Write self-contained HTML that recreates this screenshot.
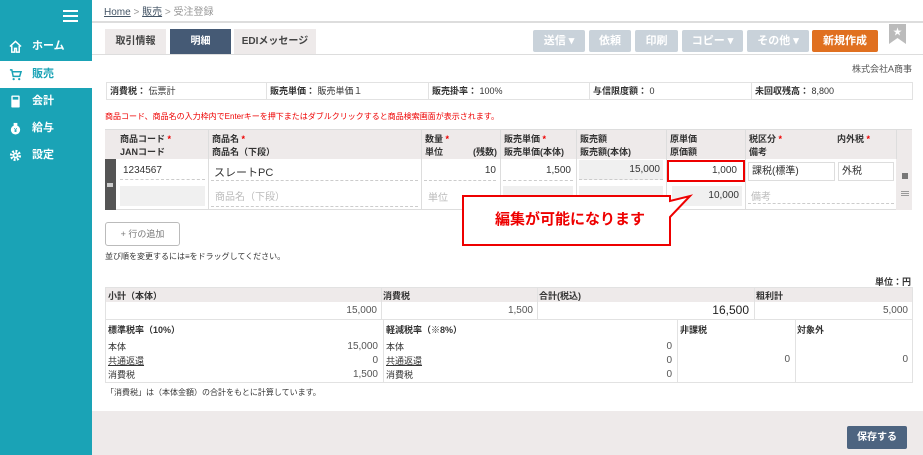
<!DOCTYPE html>
<html><head><meta charset="utf-8"><style>
*{box-sizing:border-box;margin:0;padding:0}
body{width:923px;height:455px;overflow:hidden;background:#fff;font-family:"Liberation Sans","Noto Sans CJK JP",sans-serif;font-size:10px;color:#333;position:relative}
.a{position:absolute}
#side{left:0;top:0;width:92px;height:455px;background:#1aa3b6}
.nav{position:absolute;left:0;width:92px;height:27px;color:#fff;font-weight:bold;font-size:11px;line-height:27px;padding-left:32px}
.nav.on{background:#fff;color:#1aa3b6}
.ic{position:absolute;left:9px;top:7px;width:13px;height:13px}
.tab{position:absolute;top:29px;height:25px;background:#eeeaea;line-height:25px;text-align:center;font-size:10px;font-weight:bold;color:#444}
.btn{position:absolute;top:30px;height:22px;background:#c9d2da;color:#fff;border-radius:2px;line-height:22px;text-align:center;font-weight:bold;font-size:11px}
.cell{position:absolute;border:1px solid #e2e2e2;height:18px;line-height:16px;padding-left:3px;font-size:9px}
.th{position:absolute;font-weight:bold;font-size:9px;line-height:13px;padding:3px 3px}
.r{text-align:right}
</style></head><body>
<div id="side" class="a">
<div class="a" style="left:63px;top:10px;width:15px;height:2px;background:#fff"></div>
<div class="a" style="left:63px;top:15px;width:15px;height:2px;background:#fff"></div>
<div class="a" style="left:63px;top:20px;width:15px;height:2px;background:#fff"></div>
<div class="nav" style="top:33px"><svg class="ic" viewBox="0 0 14 14"><path d="M1 7L7 1.5 13 7M3 6v7h3V9h2v4h3V6" fill="none" stroke="#fff" stroke-width="1.6"/></svg>ホーム</div>
<div class="nav on" style="top:61px"><svg class="ic" viewBox="0 0 14 14"><path d="M1 2h2l1.5 7h7l1.5-5H4" fill="none" stroke="#1aa3b6" stroke-width="1.6"/><circle cx="5" cy="12" r="1.2" fill="#1aa3b6"/><circle cx="11" cy="12" r="1.2" fill="#1aa3b6"/></svg>販売</div>
<div class="nav" style="top:88px"><svg class="ic" viewBox="0 0 14 14"><rect x="2.5" y="0.5" width="9" height="13" rx="1" fill="#fff"/><rect x="4" y="2" width="6" height="3" fill="#1aa3b6"/></svg>会計</div>
<div class="nav" style="top:115px"><svg class="ic" viewBox="0 0 14 14"><circle cx="7" cy="8.5" r="5" fill="#fff"/><rect x="5" y="1" width="4" height="3" fill="#fff"/><text x="7" y="11" font-size="6" text-anchor="middle" fill="#1aa3b6">¥</text></svg>給与</div>
<div class="nav" style="top:142px"><svg class="ic" viewBox="0 0 14 14"><circle cx="7" cy="7" r="4.5" fill="none" stroke="#fff" stroke-width="3" stroke-dasharray="2 1.5"/><circle cx="7" cy="7" r="3" fill="#fff"/><circle cx="7" cy="7" r="1.3" fill="#1aa3b6"/></svg>設定</div>
</div>
<div class="a" style="left:104px;top:3px;font-size:10px;color:#999"><span style="color:#456;text-decoration:underline">Home</span> &gt; <span style="color:#456;text-decoration:underline">販売</span> &gt; 受注登録</div>
<div class="a" style="left:92px;top:21px;width:831px;height:2px;background:#ddd"></div>
<div class="tab" style="left:105px;width:61px">取引情報</div>
<div class="tab" style="left:170px;width:61px;background:#455a75;color:#fff">明細</div>
<div class="tab" style="left:234px;width:82px">EDIメッセージ</div>
<div class="btn" style="left:533px;width:52px">送信 ▾</div>
<div class="btn" style="left:589px;width:42px">依頼</div>
<div class="btn" style="left:635px;width:43px">印刷</div>
<div class="btn" style="left:682px;width:61px">コピー ▾</div>
<div class="btn" style="left:747px;width:62px">その他 ▾</div>
<div class="btn" style="left:812px;width:66px;background:#e07020">新規作成</div>
<svg class="a" style="left:889px;top:24px" width="17" height="20" viewBox="0 0 17 20"><path d="M0 0h17v20l-8.5-6L0 20z" fill="#bbb"/><text x="8.5" y="11" font-size="9" fill="#fff" text-anchor="middle">★</text></svg>
<div class="a" style="left:92px;top:54px;width:831px;height:1px;background:#ddd"></div>
<div class="a" style="right:11px;top:62px;font-size:9px;color:#555">株式会社A商事</div>
<div class="cell" style="left:106px;top:82px;width:161px"><b>消費税：</b> 伝票計</div>
<div class="cell" style="left:266px;top:82px;width:163px"><b>販売単価：</b> 販売単価１</div>
<div class="cell" style="left:428px;top:82px;width:162px"><b>販売掛率：</b> 100%</div>
<div class="cell" style="left:589px;top:82px;width:163px"><b>与信限度額：</b> 0</div>
<div class="cell" style="left:751px;top:82px;width:162px"><b>未回収残高：</b> 8,800</div>
<div class="a" style="left:105px;top:111px;font-size:8px;color:#e00">商品コード、商品名の入力枠内でEnterキーを押下またはダブルクリックすると商品検索画面が表示されます。</div>
<div class="a" style="left:105px;top:129px;width:807px;height:81px;border:1px solid #ddd;background:#fff"></div>
<div class="a" style="left:105px;top:130px;width:807px;height:29px;background:#eeeaea"></div>
<div class="th" style="left:117px;top:130px">商品コード <span style="color:#e00">*</span><br>JANコード</div>
<div class="th" style="left:209px;top:130px">商品名 <span style="color:#e00">*</span><br>商品名（下段）</div>
<div class="th" style="left:422px;top:130px;width:78px">数量 <span style="color:#e00">*</span><br>単位<span style="float:right">(残数)</span></div>
<div class="th" style="left:501px;top:130px">販売単価 <span style="color:#e00">*</span><br>販売単価(本体)</div>
<div class="th" style="left:577px;top:130px">販売額<br>販売額(本体)</div>
<div class="th" style="left:667px;top:130px">原単価<br>原価額</div>
<div class="th" style="left:746px;top:130px">税区分 <span style="color:#e00">*</span><br>備考</div>
<div class="th" style="left:834px;top:130px">内外税 <span style="color:#e00">*</span></div>
<div class="a" style="left:105px;top:159px;width:11px;height:51px;background:#555"></div>
<div class="a" style="left:107px;top:183px;width:6px;height:4px;background:#ccc"></div>
<div class="a" style="left:208px;top:130px;width:1px;height:80px;background:#ddd"></div>
<div class="a" style="left:421px;top:130px;width:1px;height:80px;background:#ddd"></div>
<div class="a" style="left:500px;top:130px;width:1px;height:80px;background:#ddd"></div>
<div class="a" style="left:576px;top:130px;width:1px;height:80px;background:#ddd"></div>
<div class="a" style="left:666px;top:130px;width:1px;height:80px;background:#ddd"></div>
<div class="a" style="left:745px;top:130px;width:1px;height:80px;background:#ddd"></div>
<div class="a" style="left:896px;top:130px;width:1px;height:80px;background:#ddd"></div>
<div class="a" style="left:896px;top:159px;width:16px;height:51px;background:#eeeaea"></div>
<div class="a" style="left:902px;top:173px;width:6px;height:6px;background:#777"></div>
<div class="a" style="left:901px;top:191px;width:8px;height:1px;background:#999;box-shadow:0 2px #999,0 4px #999"></div>
<div class="a" style="left:123px;top:165px;font-size:10px">1234567</div>
<div class="a" style="left:120px;top:179px;width:85px;border-top:1px dashed #ccc"></div>
<div class="a" style="left:120px;top:186px;width:85px;height:20px;background:#f0f0f0"></div>
<div class="a" style="left:214px;top:164px;font-size:11px">スレートPC</div>
<div class="a" style="left:211px;top:180px;width:207px;border-top:1px dashed #ccc"></div>
<div class="a" style="left:215px;top:188px;font-size:10px;color:#bbb">商品名（下段）</div>
<div class="a" style="left:211px;top:206px;width:207px;border-top:1px dashed #ccc"></div>
<div class="a r" style="left:424px;top:165px;width:72px;font-size:10px">10</div>
<div class="a" style="left:424px;top:180px;width:72px;border-top:1px dashed #ccc"></div>
<div class="a" style="left:428px;top:189px;font-size:10px;color:#bbb">単位</div>
<div class="a r" style="left:503px;top:165px;width:68px;font-size:10px">1,500</div>
<div class="a" style="left:503px;top:180px;width:70px;border-top:1px dashed #ccc"></div>
<div class="a" style="left:503px;top:186px;width:70px;height:20px;background:#f0f0f0"></div>
<div class="a" style="left:579px;top:160px;width:84px;height:20px;background:#f0f0f0;border-bottom:1px dashed #ccc;text-align:right;line-height:20px;font-size:10px;padding-right:3px">15,000</div>
<div class="a" style="left:579px;top:186px;width:84px;height:20px;background:#f0f0f0"></div>
<div class="a" style="left:667px;top:160px;width:78px;height:22px;border:2px solid #e00;text-align:right;line-height:18px;font-size:10px;padding-right:6px;background:#fff">1,000</div>
<div class="a" style="left:672px;top:186px;width:70px;height:20px;background:#f0f0f0;text-align:right;line-height:20px;font-size:10px;padding-right:3px">10,000</div>
<div class="a" style="left:748px;top:162px;width:87px;height:19px;border:1px solid #ddd;line-height:17px;font-size:10px;padding-left:3px">課税(標準)</div>
<div class="a" style="left:838px;top:162px;width:56px;height:19px;border:1px solid #ddd;line-height:17px;font-size:10px;padding-left:3px">外税</div>
<div class="a" style="left:751px;top:188px;font-size:10px;color:#bbb">備考</div>
<div class="a" style="left:748px;top:203px;width:146px;border-top:1px dashed #ccc"></div>
<svg class="a" style="left:460px;top:193px" width="235" height="55"><path d="M3 3H210V8L230 3 210 24V52H3Z" fill="#fff" stroke="#e00" stroke-width="2"/><text x="35" y="31" font-size="15" font-weight="bold" fill="#e00" font-family="Liberation Sans,Noto Sans CJK JP,sans-serif">編集が可能になります</text></svg>
<div class="a" style="left:105px;top:222px;width:75px;height:24px;border:1px solid #bbb;border-radius:3px;text-align:center;line-height:22px;color:#777;font-size:9px">+ 行の追加</div>
<div class="a" style="left:105px;top:251px;font-size:8px">並び順を変更するには≡をドラッグしてください。</div>
<div class="a" style="right:12px;top:275px;font-size:9px;font-weight:bold">単位：円</div>
<div class="a" style="left:105px;top:287px;width:808px;height:96px;border:1px solid #e2e2e2"></div>
<div class="a" style="left:106px;top:288px;width:806px;height:14px;background:#eeeaea"></div>
<div class="a" style="left:108px;top:289px;font-size:9px;font-weight:bold">小計（本体）</div>
<div class="a" style="left:383px;top:289px;font-size:9px;font-weight:bold">消費税</div>
<div class="a" style="left:539px;top:289px;font-size:9px;font-weight:bold">合計(税込)</div>
<div class="a" style="left:756px;top:289px;font-size:9px;font-weight:bold">粗利計</div>
<div class="a" style="left:381px;top:288px;width:1px;height:31px;background:#e2e2e2"></div>
<div class="a" style="left:537px;top:288px;width:1px;height:31px;background:#e2e2e2"></div>
<div class="a" style="left:754px;top:288px;width:1px;height:31px;background:#e2e2e2"></div>
<div class="a r" style="left:106px;top:305px;width:271px;font-size:10px;color:#555">15,000</div>
<div class="a r" style="left:382px;top:305px;width:151px;font-size:10px;color:#555">1,500</div>
<div class="a r" style="left:538px;top:303px;width:211px;font-size:12px;color:#222">16,500</div>
<div class="a r" style="left:755px;top:305px;width:153px;font-size:10px;color:#555">5,000</div>
<div class="a" style="left:106px;top:319px;width:806px;height:1px;background:#e2e2e2"></div>
<div class="a" style="left:383px;top:320px;width:1px;height:63px;background:#e2e2e2"></div>
<div class="a" style="left:677px;top:320px;width:1px;height:63px;background:#e2e2e2"></div>
<div class="a" style="left:795px;top:320px;width:1px;height:63px;background:#e2e2e2"></div>
<div class="a" style="left:108px;top:323px;font-size:9px;font-weight:bold">標準税率（10%）</div>
<div class="a" style="left:386px;top:323px;font-size:9px;font-weight:bold">軽減税率（※8%）</div>
<div class="a" style="left:680px;top:323px;font-size:9px;font-weight:bold">非課税</div>
<div class="a" style="left:797px;top:323px;font-size:9px;font-weight:bold">対象外</div>
<div class="a" style="left:108px;top:340px;font-size:9px;line-height:14px">本体<br><u>共通返還</u><br>消費税</div>
<div class="a r" style="left:300px;top:340px;width:78px;font-size:10px;line-height:14px;color:#555">15,000<br>0<br>1,500</div>
<div class="a" style="left:386px;top:340px;font-size:9px;line-height:14px">本体<br><u>共通返還</u><br>消費税</div>
<div class="a r" style="left:600px;top:340px;width:72px;font-size:10px;line-height:14px;color:#555">0<br>0<br>0</div>
<div class="a r" style="left:700px;top:354px;width:90px;font-size:10px;color:#555">0</div>
<div class="a r" style="left:820px;top:354px;width:88px;font-size:10px;color:#555">0</div>
<div class="a" style="left:106px;top:387px;font-size:8px">「消費税」は（本体金額）の合計をもとに計算しています。</div>
<div class="a" style="left:92px;top:411px;width:831px;height:44px;background:#eeeaea"></div>
<div class="a" style="left:847px;top:426px;width:60px;height:23px;background:#4d6480;border-radius:2px;color:#fff;font-weight:bold;font-size:10px;text-align:center;line-height:23px">保存する</div>
</body></html>
